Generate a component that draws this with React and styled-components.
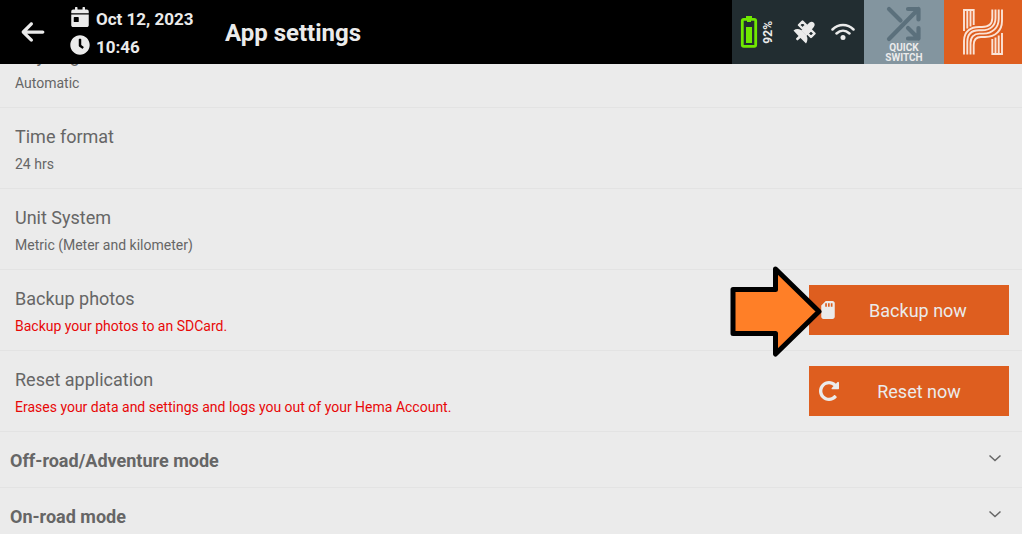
import styled, { createGlobalStyle } from 'styled-components'
import { FaArrowLeft } from 'react-icons/fa6'
import { FaCalendarDay, FaClock, FaSdCard } from 'react-icons/fa'

const colors = {
  page: '#ebebeb',
  text: '#666',
  light: '#ebebeb',
  danger: '#e80808',
  brand: '#de5e1f',
  line: '#e3e3e3',
  status: '#222d31',
  quick: '#83959f'
}

const HEADER_HEIGHT = 64

const GlobalStyle = createGlobalStyle`
  * {
    box-sizing: border-box;
  }
  html, body, #root {
    height: 100%;
  }
  body {
    margin: 0;
    overflow: hidden;
    background: ${colors.page};
    color: ${colors.text};
    font-family: Roboto, "Liberation Sans", sans-serif;
  }
  button {
    border: 0;
    padding: 0;
    background: none;
    color: inherit;
    font: inherit;
    cursor: pointer;
  }
  svg {
    display: block;
    flex: none;
  }
`

const Screen = styled.div`
  height: 100%;
  overflow: hidden;
`

const Header = styled.header`
  position: relative;
  z-index: 1;
  display: flex;
  align-items: stretch;
  height: ${HEADER_HEIGHT}px;
  background: #000;
  color: ${colors.light};
`

const BackButton = styled.button`
  display: flex;
  align-items: center;
  justify-content: center;
  width: 65px;
`

const DateTime = styled.div`
  display: flex;
  flex-direction: column;
  justify-content: center;
  gap: 4px;
  width: 160px;
  padding-left: 5px;
  padding-bottom: 2px;
  font-size: 17px;
  font-weight: 700;
  line-height: 20px;
`

const DateLine = styled.div`
  display: flex;
  align-items: center;
  gap: 6px;
`

const DateText = styled.span`
  padding-top: 4px;
`

const IconSlot = styled.span`
  display: flex;
  justify-content: center;
  width: 20px;
`

const Title = styled.h1`
  flex: 1;
  align-self: center;
  margin: 0;
  padding-top: 2px;
  font-size: 24px;
  font-weight: 700;
  line-height: 28px;
`

const Status = styled.div`
  display: flex;
  align-items: center;
  width: 132px;
  padding-left: 8px;
  background: ${colors.status};
`

const Percent = styled.span`
  width: 16px;
  margin: 0 17px 0 2px;
  font-size: 12px;
  font-weight: 700;
  line-height: 16px;
  text-align: center;
  writing-mode: vertical-rl;
  transform: rotate(180deg);
`

const Wifi = styled.svg`
  margin-left: 14px;
`

const QuickSwitch = styled.button`
  display: flex;
  flex-direction: column;
  align-items: center;
  width: 80px;
  padding-top: 6px;
  background: ${colors.quick};
  font-size: 10px;
  font-weight: 700;
  line-height: 10px;
`

const HomeButton = styled.button`
  display: flex;
  align-items: center;
  justify-content: center;
  width: 78px;
  background: ${colors.brand};
`

// scrolled so that the first row is partly under the header
const Settings = styled.main`
  margin-top: -37px;
`

const Row = styled.section`
  display: flex;
  align-items: center;
  justify-content: space-between;
  height: 81px;
  padding: 0 13px 0 15px;
  border-bottom: 1px solid ${colors.line};
`

const RowTitle = styled.h2`
  margin: 0;
  padding-top: 3px;
  font-size: 18px;
  font-weight: 400;
  line-height: 24px;
`

const RowText = styled.p`
  margin: 5px 0 0;
  color: ${props => props.$danger ? colors.danger : colors.text};
  font-size: 14px;
  line-height: 20px;
`

const ActionButton = styled.button`
  display: flex;
  align-items: center;
  width: 200px;
  height: 50px;
  padding: 0 10px;
  background: ${colors.brand};
  color: ${colors.light};
  font-size: 18px;
`

const ActionLabel = styled.span`
  flex: 1;
  text-align: center;
`

const ActionWrapper = styled.div`
  position: relative;
`

const Pointer = styled.svg`
  position: absolute;
  top: -20px;
  left: -79px;
  pointer-events: none;
`

const Group = styled.button`
  display: flex;
  align-items: center;
  justify-content: space-between;
  width: 100%;
  height: 56px;
  padding: 2px 20px 0 10px;
  border-bottom: 1px solid ${colors.line};
  font-size: 18px;
  font-weight: 700;
  line-height: 24px;
  text-align: left;
`

const Chevron = styled.svg`
  margin-bottom: 6px;
`

const BatteryIcon = () => (
  <svg width='18' height='34' viewBox='0 0 18 34'>
    <path d='M6 2.500h6' stroke='#70e800' strokeWidth='3' />
    <rect x='2.300' y='4.300' width='13.400' height='27' rx='1.500' fill='none' stroke='#70e800' strokeWidth='2.800' />
    <path d='M7 5h4v2H7zM6 12h6v16H6z' fill='#70e800' />
  </svg>
)

const SatelliteIcon = () => (
  <svg width='24' height='24' viewBox='0 0 24 24' fill='currentColor'>
    <path d='M9.500 1.500l3.500 3.500-3.500 3.500L6 5zM18 10l3.500 3.500L18 17l-3.500-3.500z' fill='none' stroke='currentColor' strokeWidth='2.400' strokeLinejoin='round' />
    <path d='M16.500 2.500q2.500-1.500 4.300.3t0 4.200L13.500 16 8 10.500z' />
    <path d='M.5 10.500Q4 8 8 10l5.500 5.500q2 4-.5 8L7.500 18l-3 2.500q-1.500-.5-1.500-2L5.500 16z' />
  </svg>
)

const ShuffleIcon = () => (
  <svg width='36' height='37' viewBox='0 0 36 37' fill='none' stroke='#5b707c' strokeWidth='4.200' strokeLinecap='round' strokeLinejoin='round'>
    <path d='M3 33L32.500 3M22 3h10.500v10.500M3 3l11.500 11.500M22 22l10.500 10.500M32.500 22v10.500H22' />
  </svg>
)

const LogoIcon = () => (
  <svg width='40' height='46' viewBox='0 0 40 46' fill='none' stroke='#fbe3d6' strokeWidth='1.900'>
    <path d='M1 22V1h9.700v15M4.300 19.500V1M7.500 17.500V1' />
    <path d='M39 24v21h-9.700V30M35.700 26.500V45M32.500 28.500V45' />
    <path d='M1 45.500V32C1 22 8 18 16 18h3c7 0 10.300-3 10.300-9V.5' />
    <path d='M4.300 45.500V33c0-8 4.700-11.700 11.700-11.700h3c8 0 13.500-4.300 13.500-12.300V.5' />
    <path d='M7.500 45.500V34c0-6 3.500-9.400 9-9.400h4C29 24.600 35.700 19 35.700 10V.5' />
    <path d='M10.700 45.500V36c0-5 2.300-8 7.300-8h4C33 28 39 21 39 12V.5' />
  </svg>
)

const ResetIcon = () => (
  <svg width='20' height='20' viewBox='0 0 1536 1536' fill='currentColor'>
    <path d='M1536 128v448q0 26-19 45t-45 19H1024q-42 0-59-40-17-39 14-69l138-138Q969 256 768 256q-104 0-198.500 40.500T406 406 296.500 569.500 256 768t40.500 198.500T406 1130t163.500 109.500T768 1280q119 0 225-52t179-147q7-10 23-12 15 0 25 9l137 138q9 8 9.500 20.500t-7.500 22.500q-109 132-264 204.500T768 1536q-156 0-298-61t-245-164-164-245T0 768t61-298 164-245T470 61 768 0q147 0 284.500 55.500T1297 212l130-129q29-31 70-14 39 17 39 59z' />
  </svg>
)

const rows = [
  { title: 'Day/Night', text: 'Automatic' },
  { title: 'Time format', text: '24 hrs' },
  { title: 'Unit System', text: 'Metric (Meter and kilometer)' },
  {
    title: 'Backup photos',
    text: 'Backup your photos to an SDCard.',
    danger: true,
    action: 'Backup now',
    icon: <FaSdCard width={15} height={20} />,
    pointer: true
  },
  {
    title: 'Reset application',
    text: 'Erases your data and settings and logs you out of your Hema Account.',
    danger: true,
    action: 'Reset now',
    icon: <ResetIcon />
  }
]

const groups = ['Off-road/Adventure mode', 'On-road mode']

const TopBar = () => (
  <Header>
    <BackButton aria-label='Back'>
      <FaArrowLeft size={26} />
    </BackButton>
    <DateTime>
      <DateLine>
        <IconSlot><FaCalendarDay size={20} /></IconSlot>
        <DateText>Oct 12, 2023</DateText>
      </DateLine>
      <DateLine>
        <IconSlot><FaClock size={20} /></IconSlot>
        <DateText>10:46</DateText>
      </DateLine>
    </DateTime>
    <Title>App settings</Title>
    <Status>
      <BatteryIcon />
      <Percent>92%</Percent>
      <SatelliteIcon />
      <Wifi width='24' height='18' viewBox='0 0 24 18' fill='none' stroke='currentColor' strokeWidth='2.500' strokeLinecap='round'>
        <path d='M1.500 6.500c6-6 15-6 21 0M5.500 10.500c4-3.700 9-3.700 13 0' />
        <circle cx='12' cy='14.500' r='2.500' fill='currentColor' stroke='none' />
      </Wifi>
    </Status>
    <QuickSwitch>
      <ShuffleIcon />
      <span>QUICK</span>
      <span>SWITCH</span>
    </QuickSwitch>
    <HomeButton aria-label='Home'>
      <LogoIcon />
    </HomeButton>
  </Header>
)

const App = () => {
  return <Screen>
    <GlobalStyle />
    <TopBar />
    <Settings>
      {
        rows.map(row => (
          <Row key={row.title}>
            <div>
              <RowTitle>{row.title}</RowTitle>
              <RowText $danger={row.danger}>{row.text}</RowText>
            </div>
            {row.action && (
              <ActionWrapper>
                <ActionButton>
                  {row.icon}
                  <ActionLabel>{row.action}</ActionLabel>
                </ActionButton>
                {row.pointer && (
                  <Pointer width='94' height='94' viewBox='0 0 94 94'>
                    <path
                      d='M3 24.500h42.500V4L89 46.500 45.500 89V68.500H3z'
                      fill='#ff7f27'
                      stroke='#000'
                      strokeWidth='5'
                      strokeLinejoin='round'
                    />
                  </Pointer>
                )}
              </ActionWrapper>
            )}
          </Row>
        ))
      }
      {
        groups.map(name => (
          <Group key={name} aria-expanded='false'>
            {name}
            <Chevron width='14' height='8' viewBox='0 0 14 8' fill='none' stroke='currentColor' strokeWidth='1.500'>
              <path d='M1.500 1.500L7 6.500l5.500-5' />
            </Chevron>
          </Group>
        ))
      }
    </Settings>
  </Screen>
}

export default App
